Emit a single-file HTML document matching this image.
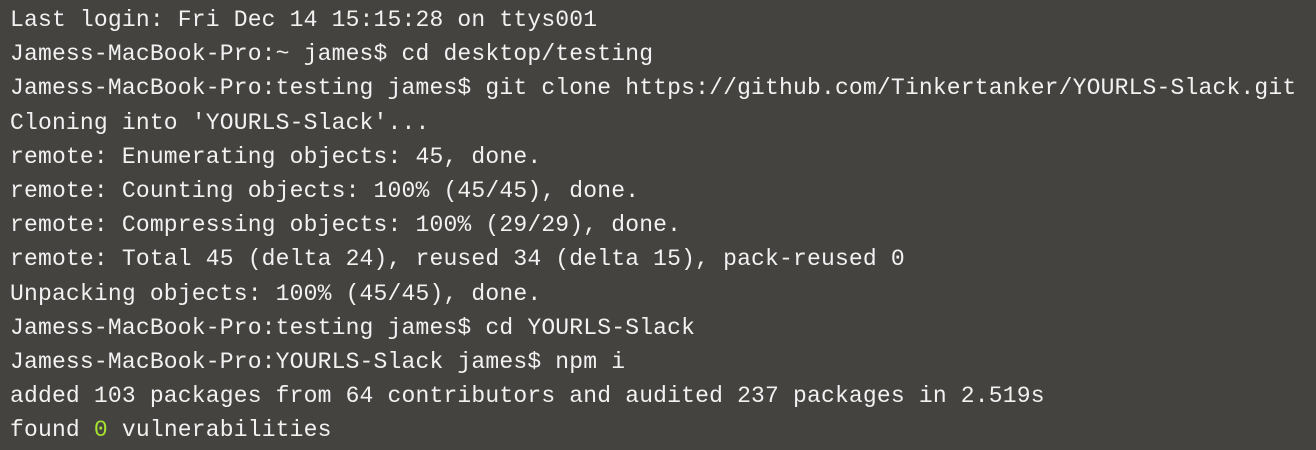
<!DOCTYPE html>
<html><head><style>
html,body{margin:0;padding:0;background:#454340;width:1316px;height:450px;overflow:hidden}
pre{margin:0;padding:3px 0 0 10px;font-family:"Liberation Mono",monospace;font-size:23px;letter-spacing:0.18px;line-height:34.2px;color:#f2f2f2}
.g{color:#a6e22e}
</style></head><body><pre>Last login: Fri Dec 14 15:15:28 on ttys001
Jamess-MacBook-Pro:~ james$ cd desktop/testing
Jamess-MacBook-Pro:testing james$ git clone https://github.com/Tinkertanker/YOURLS-Slack.git
Cloning into 'YOURLS-Slack'...
remote: Enumerating objects: 45, done.
remote: Counting objects: 100% (45/45), done.
remote: Compressing objects: 100% (29/29), done.
remote: Total 45 (delta 24), reused 34 (delta 15), pack-reused 0
Unpacking objects: 100% (45/45), done.
Jamess-MacBook-Pro:testing james$ cd YOURLS-Slack
Jamess-MacBook-Pro:YOURLS-Slack james$ npm i
added 103 packages from 64 contributors and audited 237 packages in 2.519s
found <span class="g">0</span> vulnerabilities
</pre></body></html>
